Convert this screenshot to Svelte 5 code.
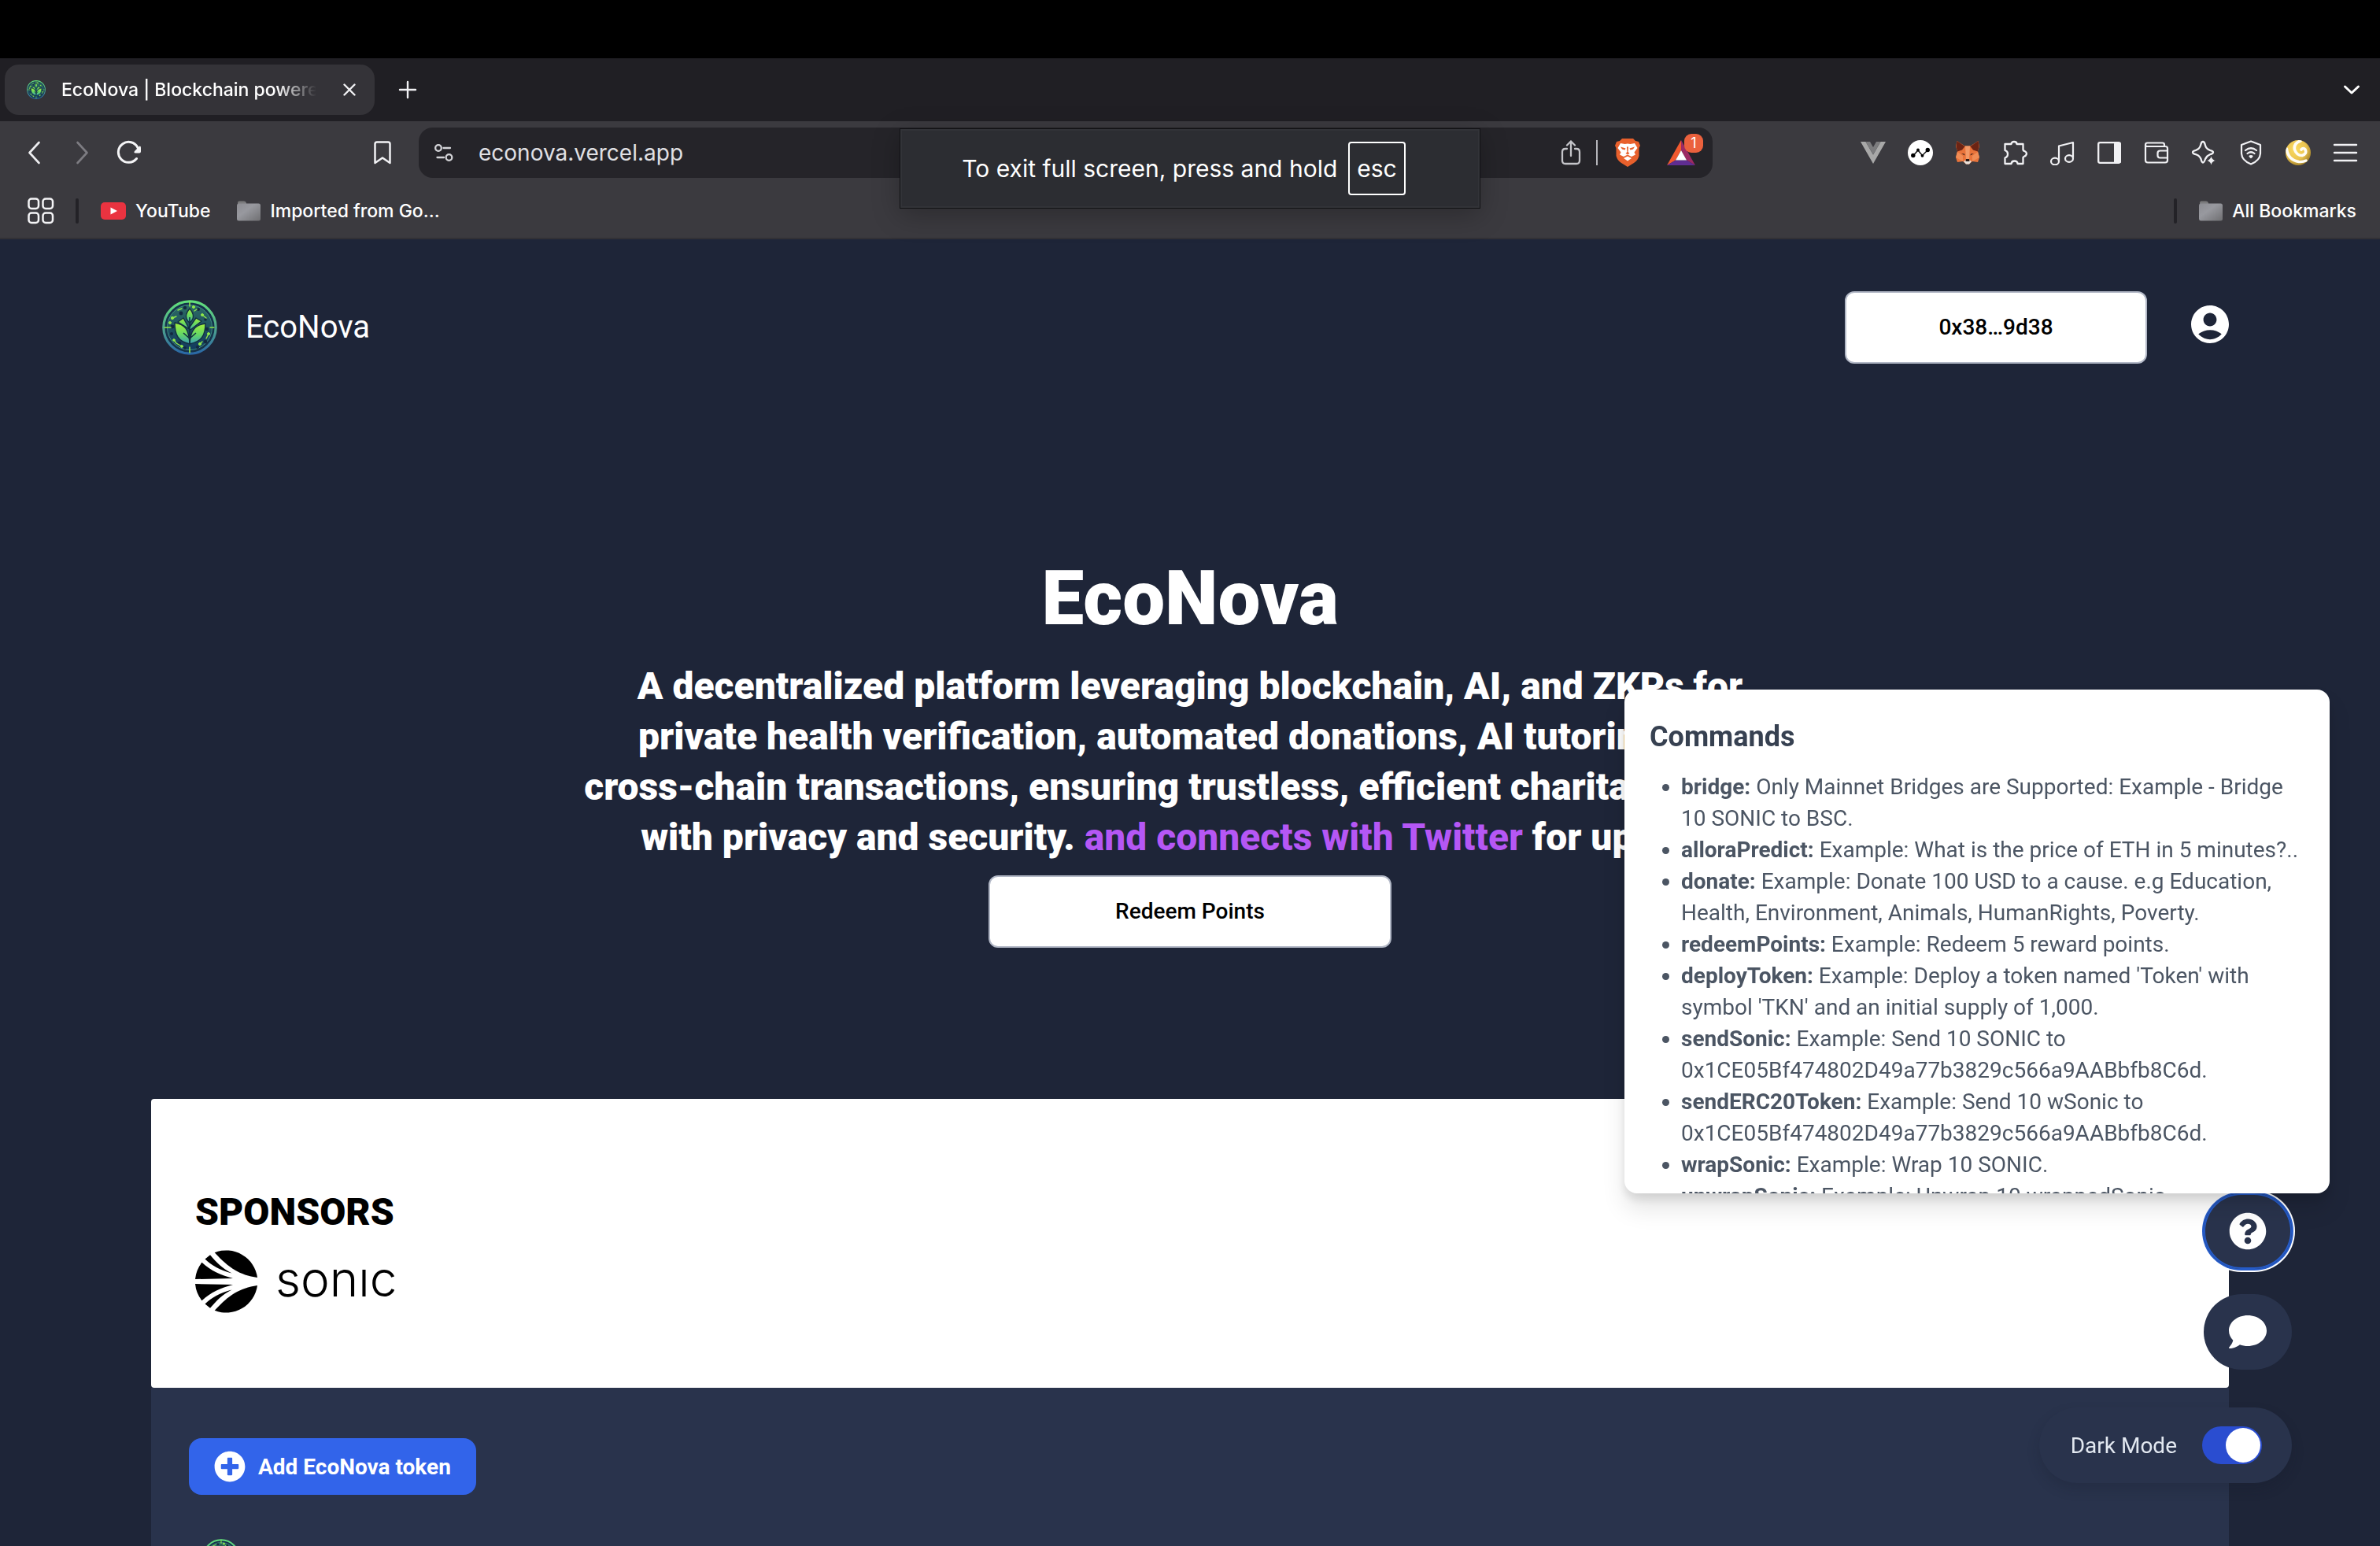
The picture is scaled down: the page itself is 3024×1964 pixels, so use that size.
<script>
  let darkMode = $state(true);
  let helpOpen = $state(true);
  let url = $state('econova.vercel.app');

  const commands = [
    ['bridge', 'Only Mainnet Bridges are Supported: Example - Bridge 10 SONIC to BSC.'],
    ['alloraPredict', 'Example: What is the price of ETH in 5 minutes?..'],
    ['donate', 'Example: Donate 100 USD to a cause. e.g Education, Health, Environment, Animals, HumanRights, Poverty.'],
    ['redeemPoints', 'Example: Redeem 5 reward points.'],
    ['deployToken', "Example: Deploy a token named 'Token' with symbol 'TKN' and an initial supply of 1,000."],
    ['sendSonic', 'Example: Send 10 SONIC to 0x1CE05Bf474802D49a77b3829c566a9AABbfb8C6d.'],
    ['sendERC20Token', 'Example: Send 10 wSonic to 0x1CE05Bf474802D49a77b3829c566a9AABbfb8C6d.'],
    ['wrapSonic', 'Example: Wrap 10 SONIC.'],
    ['unwrapSonic', 'Example: Unwrap 10 wrappedSonic.']
  ];
</script>

{#snippet ecoLogo(id)}
  <svg class="eco-logo" viewBox="0 0 70 70" aria-hidden="true">
    <defs>
      <linearGradient id="{id}-ring" x1="0" y1="0" x2="0" y2="1">
        <stop offset="0" stop-color="#62e07c" />
        <stop offset="0.5" stop-color="#4fa58c" />
        <stop offset="1" stop-color="#2a67a5" />
      </linearGradient>
      <linearGradient id="{id}-leaf" x1="0" y1="0" x2="0" y2="1">
        <stop offset="0" stop-color="#a4ee3c" />
        <stop offset="0.55" stop-color="#63d765" />
        <stop offset="1" stop-color="#3a9db8" />
      </linearGradient>
      <linearGradient id="{id}-disc" x1="0" y1="0" x2="0" y2="1">
        <stop offset="0" stop-color="#2c6a63" />
        <stop offset="1" stop-color="#123a5e" />
      </linearGradient>
    </defs>
    <circle cx="35" cy="35" r="33.2" fill="#15324a" stroke="url(#{id}-ring)" stroke-width="3.2" />
    <circle cx="35" cy="35" r="28.5" fill="url(#{id}-disc)" stroke="#3f8f83" stroke-width="1" />
    <g fill="#13283f">
      <circle cx="29" cy="10" r="2.2" /><circle cx="24" cy="17" r="2.4" /><circle cx="46" cy="12" r="2" />
      <circle cx="13" cy="34" r="2.4" /><circle cx="57" cy="37" r="2.2" /><circle cx="12" cy="43" r="2" />
      <circle cx="22" cy="55" r="2.2" /><circle cx="45" cy="60" r="2" /><circle cx="55" cy="53" r="2.2" />
      <circle cx="55" cy="25" r="1.8" /><circle cx="29" cy="61" r="1.8" />
    </g>
    <g fill="#8fe84a" stroke="#8fe84a" stroke-linecap="round">
      <circle cx="13" cy="23" r="1.7" /><circle cx="10" cy="29" r="1.5" /><circle cx="40" cy="9" r="1.6" />
      <circle cx="51" cy="19" r="1.5" /><circle cx="59" cy="43" r="1.5" /><circle cx="48" cy="56" r="1.6" />
      <circle cx="15" cy="51" r="1.3" /><circle cx="25" cy="59" r="1.4" />
      <path d="M13 23l5-2M20 13l5-2M51 19l5 4M59 43l-3 6M48 56l3-3M15 51l3 4l7 4M41 14l3-2" fill="none" stroke-width="1.4" />
      <path d="M35 3v5M35 60v7M3 35h8M61 35h5" fill="none" stroke-width="1.6" />
    </g>
    <g fill="url(#{id}-leaf)" stroke="#122f40" stroke-width="1.4" stroke-linejoin="round">
      <path d="M20 28L27 23L34 36L43 23L50 27L36 38Z" />
      <path d="M35 11C41 18 41 24 35 29C29 24 29 18 35 11Z" />
      <path d="M16 29C29 31 34 37 35 56C20 53 16 44 16 29Z" />
      <path d="M55 30C42 32 36 38 35 56C50 53 55 45 55 30Z" />
    </g>
    <path d="M35 22V56M27 42L35 49M43 42L35 49" fill="none" stroke="#122f40" stroke-width="1.6" />
  </svg>
{/snippet}

{#snippet folder(id)}
  <svg class="folder" viewBox="0 0 30 26" aria-hidden="true">
    <defs>
      <linearGradient id={id} x1="0" y1="0" x2="1" y2="1">
        <stop offset="0" stop-color="#8d8d93" />
        <stop offset="0.4" stop-color="#98999f" />
        <stop offset="1" stop-color="#6f6f72" />
      </linearGradient>
    </defs>
    <path d="M1 2.500Q1 .5 3 .5H9Q11 .5 12 2.500V6H1Z" fill="#7b7b7d" />
    <rect x="0" y="3.500" width="30" height="22" rx="2.500" fill="url(#{id})" />
  </svg>
{/snippet}

<div class="screen">
  <div class="notch"></div>

  <div class="tabs">
    <div class="tab">
      <span class="favicon">{@render ecoLogo('fav')}</span>
      <span class="tab-title">EcoNova | Blockchain powered</span>
      <button class="plain" aria-label="Close tab">
        <svg class="i16" viewBox="0 0 16 16"><path d="M1.500 1.500l13 13M14.500 1.500l-13 13" fill="none" stroke="#f1f1f4" stroke-width="2.400" stroke-linecap="round" /></svg>
      </button>
    </div>
    <button class="plain new-tab" aria-label="New tab">
      <svg class="i24" viewBox="0 0 24 24"><path d="M12 2v20M2 12h20" fill="none" stroke="#f1f1f4" stroke-width="2.400" stroke-linecap="round" /></svg>
    </button>
    <button class="plain tab-search" aria-label="Search tabs">
      <svg class="i24" viewBox="0 0 24 24"><path d="M3.500 8L12 16L20.500 8" fill="none" stroke="#fff" stroke-width="3" stroke-linecap="round" stroke-linejoin="round" /></svg>
    </button>
  </div>

  <div class="toolbar">
    <div class="row">
      <nav class="nav" aria-label="Browser">
        <button class="plain" aria-label="Back">
          <svg class="i32" viewBox="0 0 32 32"><path d="M21.500 3L9.500 16L21.500 29" fill="none" stroke="#eeeef1" stroke-width="2.600" stroke-linecap="round" stroke-linejoin="round" /></svg>
        </button>
        <button class="plain" aria-label="Forward" disabled>
          <svg class="i32" viewBox="0 0 32 32"><path d="M10.500 3L22.500 16L10.500 29" fill="none" stroke="#7d7c82" stroke-width="2.600" stroke-linecap="round" stroke-linejoin="round" /></svg>
        </button>
        <button class="plain" aria-label="Reload">
          <svg class="i32" viewBox="0 0 32 32"><path d="M25.500 23.500A13 13 0 1 1 27 9.500L28.500 13" fill="none" stroke="#f4f4f6" stroke-width="3" stroke-linecap="round" /><path d="M29.500 7.500Q31 7.500 31 9.500V14.500Q31 16.500 29 16.500H24Q21.500 16 23 14Z" fill="#f4f4f6" /></svg>
        </button>
        <button class="plain mark" aria-label="Bookmark this page">
          <svg class="i32" viewBox="0 0 32 32"><path d="M6.500 5Q6.500 2.500 9 2.500H23Q25.500 2.500 25.500 5V29L16 22.500L6.500 29Z" fill="none" stroke="#f1f1f4" stroke-width="2.500" stroke-linejoin="round" /></svg>
        </button>
      </nav>

      <div class="address">
        <button class="plain site" aria-label="Site information">
          <svg class="i24" viewBox="0 0 24 24" fill="none" stroke="#d4d4d8" stroke-width="2.300" stroke-linecap="round"><circle cx="5" cy="6" r="3.800" /><path d="M11.500 6H20" /><circle cx="18.500" cy="18" r="3.800" /><path d="M3.500 18H12" /></svg>
        </button>
        <input class="url" type="text" aria-label="Address" bind:value={url} />
        <button class="plain" aria-label="Share">
          <svg class="i32" viewBox="0 0 32 32" fill="none" stroke="#c5c5ca" stroke-width="2.300" stroke-linecap="round" stroke-linejoin="round"><path d="M16 20V1.500M11 6.500L16 1.500L21 6.500M11 11H9Q5 11 5 15V26Q5 30 9 30H23Q27 30 27 26V15Q27 11 23 11H21" /></svg>
        </button>
        <span class="bar-sep"></span>
        <button class="plain lion" aria-label="Brave Shields">
          <svg class="i36" viewBox="0 0 32 36">
            <path d="M9 0H23L26 3L30 4L32 9L30.500 12L30.500 22Q29 28 24 31L16 36L8 31Q3 28 1.500 22V12L0 9L2 4L6 3Z" fill="#e8602c" />
            <path d="M7 6L12.500 7L16 6.500L19.500 7L25 6L28.500 12L24.500 17.500L26 20.500L21 23L16 20.500L11 23L6 20.500L7.500 17.500L3.500 12Z" fill="#fff" />
            <path d="M11 25L16 22.500L21 25L16 28.500Z" fill="#fff" />
            <path d="M7 10.500L13.500 12.500L12.500 14.500L9 13.500ZM25 10.500L18.500 12.500L19.500 14.500L23 13.500ZM15 10.500H17L16.600 17L18.500 19L16 20.200L13.500 19L15.400 17Z" fill="#e8602c" />
          </svg>
        </button>
        <button class="plain rewards" aria-label="Rewards, 1 new">
          <svg class="i36" viewBox="0 0 36 36">
            <path d="M18 2L0 34L11 27.500L18 15Z" fill="#f1592f" />
            <path d="M18 2V15L25 27.500L36 34Z" fill="#9c2a63" />
            <path d="M0 34L11 27.500H25L36 34Z" fill="#5f2d91" />
            <path d="M18 15L11 27.500H25Z" fill="#fff" />
          </svg>
          <span class="badge">1</span>
        </button>
      </div>

      <div class="extensions">
        <button class="plain" aria-label="Vue devtools">
          <svg class="i32" viewBox="0 0 32 32"><path d="M0 2H6.500L16 18.500L25.500 2H32L16 30Z" fill="#a8a8a8" /><path d="M6.500 2H12L16 9L20 2H25.500L16 18.500Z" fill="#7c7c7e" /></svg>
        </button>
        <button class="plain" aria-label="Analytics extension">
          <svg class="i32" viewBox="0 0 32 32"><circle cx="16" cy="16" r="16" fill="#fff" /><path d="M7 19.500L13 13L18.500 19.500L25.500 12.500" fill="none" stroke="#111" stroke-width="1.500" /><circle cx="6.800" cy="19.500" r="2.700" /><circle cx="13" cy="12.500" r="1.900" /><circle cx="18.500" cy="19.800" r="1.900" /><circle cx="25.300" cy="12.500" r="2.700" /></svg>
        </button>
        <button class="plain" aria-label="MetaMask">
          <svg class="i32" viewBox="0 0 32 32">
            <path d="M2.500 1L12.500 7.500H19.500L29.500 1L31 8L29 14L31 22L29 28L22 27L18 30.500H14L10 27L3 28L1 22L3 14L1 8Z" fill="#e9733a" />
            <path d="M2.500 1L12.500 8L9 12.500L3 14.500L1.500 8Z" fill="#6b2414" />
            <path d="M29.500 1L19.500 8L23 12.500L29 14.500L30.500 8Z" fill="#6b2414" />
            <path d="M13 7.500H19L18 25H14Z" fill="#f39a68" />
            <path d="M3 15L10 20L10 27L1 22ZM29 15L22 20L22 27L31 22Z" fill="#f08c55" />
            <path d="M8 17L12 17.500L12.500 19.500ZM24 17L20 17.500L19.500 19.500Z" fill="#3a1f1a" />
            <path d="M11 27L13.500 25.500H18.500L21 27L18 30.500H14Z" fill="#e9e2dc" />
            <path d="M14 24H18L18.500 27H13.500Z" fill="#2a1a17" />
          </svg>
        </button>
        <button class="plain" aria-label="Extensions">
          <svg class="i32" viewBox="0 0 32 32" fill="none" stroke="#f1f1f4" stroke-width="2.300" stroke-linejoin="round"><path d="M3.500 5H11.500Q11.500 2 15 2Q18.500 2 18.500 5H26.500V12.500Q27 13.800 28.500 14Q31 15.200 31 17.500Q30.500 20 27.500 21L26.500 22V30H19.500Q19.300 26.500 15.500 26.500Q12 26.500 11.500 30H3.500V22.500Q7 21.500 7 17.500Q7 14 3.500 13Z" /></svg>
        </button>
        <button class="plain" aria-label="Media">
          <svg class="i32" viewBox="0 0 32 32" fill="none" stroke="#f1f1f4" stroke-width="2.200" stroke-linejoin="round"><path d="M12 27V7.500L30 3V22.500" /><ellipse cx="7" cy="27" rx="5" ry="4.300" /><ellipse cx="25" cy="23.500" rx="5" ry="4.300" /></svg>
        </button>
        <button class="plain" aria-label="Side panel">
          <svg class="i32" viewBox="0 0 32 32"><rect x="2.200" y="3.200" width="27.600" height="25.600" rx="2" fill="none" stroke="#f1f1f4" stroke-width="2.300" /><rect x="22" y="3" width="9" height="26" rx="1.500" fill="#f1f1f4" /></svg>
        </button>
        <button class="plain" aria-label="Wallet">
          <svg class="i32" viewBox="0 0 32 32" fill="none" stroke="#f1f1f4" stroke-width="2.200" stroke-linejoin="round"><path d="M26 8V6Q26 3.500 23.500 3.500H4.500Q2 3.500 2 6V25.500Q2 28.500 5 28.500H27Q30 28.500 30 25.500V10.500Q30 8 27 8H4Q2 8 2 6M30 13.500H20.500Q17.500 13.500 17.500 16.500V19.500Q17.500 22.500 20.500 22.500H30" /></svg>
        </button>
        <button class="plain" aria-label="AI assistant">
          <svg class="i32" viewBox="0 0 32 32"><path d="M15 2Q17 2 17.800 6Q18.800 11 24 12.800Q28 13.800 28 15.500Q28 17.300 24 18.200Q19.500 20 18 24Q16.500 28.500 15 28.500Q13.500 28.500 12.500 24Q11 19.800 6 18.200Q2 17.300 2 15.500Q2 13.800 6 12.800Q11.200 11 12.200 6Q13 2 15 2Z" fill="none" stroke="#f1f1f4" stroke-width="2.300" /><path d="M25.500 19.500Q26.500 25 31.500 26Q26.500 27 25.500 32Q24.500 27 19.500 26Q24.500 25 25.500 19.500Z" fill="#f1f1f4" stroke="#3b3a3f" stroke-width="0.800" /></svg>
        </button>
        <button class="plain" aria-label="VPN">
          <svg class="i32" viewBox="0 0 32 32" fill="none" stroke="#f1f1f4" stroke-width="2.200" stroke-linecap="round" stroke-linejoin="round"><path d="M16 1.500L28 6V17Q27.500 26 16 30.500Q4.500 26 4 17V6Z" /><path d="M9 13Q16 7.500 23 13M11.500 17Q16 13.500 20.500 17" /><path d="M14.500 20.500Q16 19.500 17.500 20.500L16 22Z" fill="#f1f1f4" /></svg>
        </button>
        <button class="plain" aria-label="Profile">
          <svg class="i32" viewBox="0 0 32 32">
            <defs><radialGradient id="ball" cx="0.4" cy="0.35" r="0.7"><stop offset="0" stop-color="#fbdc62" /><stop offset="0.6" stop-color="#ebc450" /><stop offset="1" stop-color="#9d7c26" /></radialGradient><clipPath id="ball-clip"><circle cx="16" cy="16" r="16" /></clipPath></defs>
            <circle cx="16" cy="16" r="16" fill="url(#ball)" />
            <g fill="none" stroke="#fffdf5" stroke-linecap="round" clip-path="url(#ball-clip)"><path d="M19 1Q10 4 11.500 12Q14 19.500 21 19.500Q27.500 17.500 25 12Q22.500 9 20 12" stroke-width="3.600" /><path d="M1.500 11Q3 25 17 27.500Q22 28 26 26" stroke-width="3.400" /></g>
          </svg>
        </button>
        <button class="plain" aria-label="Menu">
          <svg class="i32" viewBox="0 0 32 32"><path d="M2 6H30M2 16H30M2 26H30" fill="none" stroke="#f1f1f4" stroke-width="2.400" stroke-linecap="round" /></svg>
        </button>
      </div>
    </div>

    <div class="bookmarks">
      <button class="plain" aria-label="All tabs">
        <svg class="i36" viewBox="0 0 36 36" fill="none" stroke="#f4f4f6" stroke-width="2.500"><rect x="2.500" y="2.500" width="12.500" height="12.500" rx="3.500" /><rect x="20.500" y="2.500" width="12.500" height="12.500" rx="3.500" /><rect x="2.500" y="20.500" width="12.500" height="12.500" rx="3.500" /><rect x="20.500" y="20.500" width="12.500" height="12.500" rx="3.500" /></svg>
      </button>
      <span class="sep"></span>
      <a class="bookmark" href="#youtube">
        <svg class="youtube" viewBox="0 0 32 22" aria-hidden="true"><rect width="32" height="22" rx="5" fill="#ea3340" /><path d="M12.500 6.500L21 11L12.500 15.500Z" fill="#fff" /></svg>
        YouTube
      </a>
      <a class="bookmark imported" href="#imported">{@render folder('f1')}Imported from Go...</a>
      <span class="spacer"></span>
      <span class="sep"></span>
      <a class="bookmark" href="#all">{@render folder('f2')}All Bookmarks</a>
    </div>

    <div class="fullscreen-hint" role="status">
      <span>To exit full screen, press and hold</span>
      <kbd>esc</kbd>
    </div>
  </div>

  <main class="page">
    <header class="header">
      <a class="brand" href="#home"><span class="brand-logo">{@render ecoLogo('brand')}</span>EcoNova</a>
      <div class="account">
        <button class="outlined wallet">0x38…9d38</button>
        <button class="plain profile" aria-label="Account">
          <svg class="i48" viewBox="2 2 20 20"><path fill="#fff" d="M12 2C6.480 2 2 6.480 2 12s4.480 10 10 10 10-4.480 10-10S17.520 2 12 2zm0 4c1.930 0 3.500 1.570 3.500 3.500S13.930 13 12 13s-3.500-1.570-3.500-3.500S10.070 6 12 6zm0 14c-2.030 0-4.430-.82-6.140-2.880C7.550 15.800 9.680 15 12 15s4.450.8 6.140 2.120C16.430 19.180 14.030 20 12 20z" /></svg>
        </button>
      </div>
    </header>

    <section class="hero">
      <h1>EcoNova</h1>
      <p>
        A decentralized platform leveraging blockchain, AI, and ZKPs for<br />
        private health verification, automated donations, AI tutoring, and<br />
        cross-chain transactions, ensuring trustless, efficient charitable giving<br />
        with privacy and security. <a class="twitter" href="#twitter">and connects with Twitter</a> for updates.
      </p>
      <button class="outlined redeem">Redeem Points</button>
    </section>

    <section class="sponsors">
      <h2>SPONSORS</h2>
      <a class="sonic" href="#sonic" aria-label="Sonic">
        <svg class="sonic-mark" viewBox="0 0 80 80" aria-hidden="true">
          <defs>
            <g id="sonic-half">
              <path d="M24.700 3.200A40 40 0 0 1 79 35C56 31.500 43 23 24.700 3.200Z" />
              <path d="M12.500 11.500L19 6.200C27 15.500 34 23 46.500 29.500C32 26 20 19 12.500 11.500Z" />
              <path d="M8.500 15.800C20 26.500 32 31.500 48 36L0 37A40 40 0 0 1 8.500 15.800Z" />
            </g>
          </defs>
          <use href="#sonic-half" />
          <use href="#sonic-half" transform="matrix(1 0 0 -1 0 80)" />
        </svg>
        <span class="sonic-name">sonıc</span>
      </a>
    </section>

    <section class="token">
      <button class="add-token">
        <svg class="i40" viewBox="0 0 512 512"><path fill="#fff" d="M256 8C119 8 8 119 8 256s111 248 248 248 248-111 248-248S393 8 256 8zm144 276c0 6.600-5.400 12-12 12h-92v92c0 6.600-5.400 12-12 12h-56c-6.600 0-12-5.400-12-12v-92h-92c-6.600 0-12-5.400-12-12v-56c0-6.600 5.400-12 12-12h92v-92c0-6.600 5.400-12 12-12h56c6.600 0 12 5.400 12 12v92h92c6.600 0 12 5.400 12 12v56z" /></svg>
        Add EcoNova token
      </button>
      <span class="token-logo">{@render ecoLogo('token')}</span>
    </section>
  </main>

  <div class="floating">
    <button class="fab help" aria-label="Help" aria-expanded={helpOpen} onclick={() => (helpOpen = !helpOpen)}>
      <svg class="i48" viewBox="0 0 512 512"><path fill="#fff" d="M504 256c0 136.997-111.043 248-248 248S8 392.997 8 256C8 119.083 119.043 8 256 8s248 111.083 248 248zM262.655 90c-54.497 0-89.255 22.957-116.549 63.758-3.536 5.286-2.353 12.415 2.715 16.258l34.699 26.310c5.205 3.947 12.621 3.008 16.665-2.122 17.864-22.658 30.113-35.797 57.303-35.797 20.429 0 45.698 13.148 45.698 32.958 0 14.976-12.363 22.667-32.534 33.976C247.128 238.528 216 254.941 216 296v4c0 6.627 5.373 12 12 12h56c6.627 0 12-5.373 12-12v-1.333c0-28.462 83.186-29.647 83.186-106.667 0-58.002-60.165-102-116.531-102zM256 338c-25.365 0-46 20.635-46 46 0 25.364 20.635 46 46 46s46-20.636 46-46c0-25.365-20.635-46-46-46z" /></svg>
    </button>
    <button class="fab" aria-label="Chat">
      <svg class="i48" viewBox="0 0 512 512"><path fill="#fff" d="M256 32C114.600 32 0 125.100 0 240c0 49.600 21.400 95 57 130.700C44.500 421.100 2.700 466 2.200 466.500c-2.200 2.300-2.800 5.700-1.500 8.700S4.800 480 8 480c66.300 0 116-31.800 140.600-51.400 32.700 12.300 69 19.400 107.400 19.400 141.400 0 256-93.100 256-208S397.400 32 256 32z" /></svg>
    </button>
    <label class="dark">
      <span>Dark Mode</span>
      <input type="checkbox" role="switch" bind:checked={darkMode} />
    </label>
  </div>

  {#if helpOpen}
    <aside class="commands">
      <h3>Commands</h3>
      <ul>
        {#each commands as [name, text]}
          <li><strong>{name}:</strong> {text}</li>
        {/each}
      </ul>
    </aside>
  {/if}
</div>

<style>
  :global(body) { background: #1e2538; }
  :global(*) { box-sizing: border-box; }

  .screen {
    position: relative;
    display: flex;
    flex-direction: column;
    height: 100vh;
    overflow: hidden;
    font-family: Roboto, sans-serif;
    color: #fff;
  }
  svg { display: block; flex: none; }
  a { color: inherit; text-decoration: none; }
  button { font-family: inherit; cursor: pointer; }
  .plain { display: flex; flex: none; padding: 0; border: 0; background: none; }
  .i16 { width: 16px; height: 16px; }
  .i24 { width: 24px; height: 24px; }
  .i32 { width: 32px; height: 32px; }
  .i36 { width: 36px; height: 36px; }
  .i40 { width: 40px; height: 40px; }
  .i48 { width: 48px; height: 48px; }
  .eco-logo { width: 100%; height: 100%; }

  /* browser chrome */
  .notch { flex: none; height: 74px; background: #000; }
  .tabs, .toolbar { flex: none; font-family: Inter, sans-serif; }
  .tabs {
    display: flex;
    align-items: center;
    height: 80px;
    padding: 0 24px 0 6px;
    background: #201f24;
  }
  .tab {
    display: flex;
    align-items: center;
    width: 470px;
    height: 64px;
    padding: 0 24px 0 28px;
    border-radius: 18px;
    background: #343338;
  }
  .favicon { flex: none; width: 24px; height: 24px; }
  .tab-title {
    flex: 1;
    margin: 0 24px 0 20px;
    overflow: hidden;
    white-space: nowrap;
    font-size: 23px;
    font-weight: 500;
    line-height: 32px;
    mask-image: linear-gradient(to right, #000 82%, transparent 97%);
  }
  .new-tab { margin-left: 30px; }
  .tab-search { margin-left: auto; }

  .toolbar { position: relative; padding-top: 8px; background: #3b3a3f; border-bottom: 2px solid #323136; }
  .row { display: grid; grid-template-columns: 504px 1fr 820px; align-items: center; padding: 0 28px; }
  .nav { display: flex; gap: 28px; padding-right: 30px; }
  .mark { margin-left: auto; }
  .address {
    display: flex;
    align-items: center;
    height: 64px;
    padding: 0 22px 0 20px;
    border-radius: 18px;
    background: #252429;
  }
  .url {
    flex: 1;
    min-width: 0;
    margin-left: 32px;
    padding: 0;
    border: 0;
    outline: 0;
    background: none;
    color: #e0e0e4;
    font-family: inherit;
    font-size: 28px;
    line-height: 36px;
  }
  .bar-sep { width: 2px; height: 32px; margin: 0 20px 0 16px; background: #b5b5ba; }
  .rewards { position: relative; margin-left: 32px; }
  .badge {
    position: absolute;
    top: -6px;
    left: 22px;
    width: 24px;
    height: 24px;
    border-radius: 9px;
    background: #eb613d;
    color: #fff;
    font-size: 18px;
    line-height: 24px;
    text-align: center;
  }
  .extensions { display: flex; justify-content: flex-end; gap: 28px; }

  .bookmarks {
    display: flex;
    align-items: center;
    height: 68px;
    margin-top: 8px;
    padding: 0 30px 0 34px;
    font-size: 23px;
    font-weight: 500;
  }
  .sep { width: 4px; height: 32px; margin: 0 28px 0 26px; border-radius: 2px; background: #232227; }
  .bookmark { display: flex; align-items: center; gap: 12px; }
  .imported { margin-left: 34px; }
  .spacer { flex: 1; }
  .youtube { width: 32px; height: 22px; }
  .folder { width: 30px; height: 26px; }

  .fullscreen-hint {
    position: absolute;
    top: 9px;
    left: 0;
    right: 0;
    display: flex;
    align-items: center;
    justify-content: center;
    gap: 14px;
    width: 738px;
    height: 102px;
    margin: 0 auto;
    padding-right: 16px;
    border: 1px solid #111114;
    background: #2c2d32;
    box-shadow: inset 0 0 0 2px #323338, 0 8px 32px rgba(0, 0, 0, 0.25);
    font-size: 30px;
  }
  kbd {
    padding: 14px 9px;
    border: 2px solid #fff;
    border-radius: 4px;
    font-family: inherit;
    font-size: 30px;
    line-height: 36px;
  }

  /* page */
  .page { flex: 1; min-height: 0; padding: 0 192px; background: #1e2538; }
  .header {
    display: flex;
    align-items: center;
    justify-content: space-between;
    padding-top: 66px;
  }
  .brand { display: flex; align-items: center; gap: 36px; padding-left: 14px; font-size: 40px; line-height: 56px; }
  .brand-logo { width: 70px; height: 70px; }
  .account { display: flex; align-items: center; gap: 56px; }
  .profile { padding-bottom: 8px; }
  .outlined {
    height: 92px;
    border: 2px solid #b2b8c6;
    border-radius: 12px;
    background: #fff;
    color: #000;
    font-size: 28px;
    font-weight: 500;
    line-height: 40px;
  }
  .wallet { width: 384px; }
  .redeem { width: 512px; }

  .hero { display: flex; flex-direction: column; align-items: center; padding: 250px 0 192px; text-align: center; }
  h1 { margin: 0 0 32px; font-size: 96px; font-weight: 900; line-height: 96px; }
  p { margin: 0 0 16px; font-size: 48px; font-weight: 900; line-height: 64px; white-space: nowrap; }
  .twitter { color: #b557f5; font-weight: 800; }

  .sponsors { padding: 112px 56px 95px; border-radius: 4px; background: #fff; color: #000; }
  h2 { margin: 0 0 16px; font-size: 48px; font-weight: 900; line-height: 64px; }
  .sonic { display: inline-flex; align-items: center; gap: 22px; vertical-align: top; }
  .sonic-mark { width: 80px; height: 80px; }
  .sonic-name { padding-bottom: 6px; font-family: Inter, sans-serif; font-size: 62px; font-weight: 300; line-height: 72px; }

  .token { height: 100%; padding: 64px 48px; background: #29334c; }
  .add-token {
    display: flex;
    align-items: center;
    gap: 16px;
    height: 72px;
    padding: 0 32px;
    border: 0;
    border-radius: 16px;
    background: #3264ea;
    color: #fff;
    font-size: 28px;
    font-weight: 700;
  }
  .token-logo { display: block; width: 48px; height: 48px; margin: 56px 0 0 17px; }

  /* overlays */
  .floating {
    position: fixed;
    right: 112px;
    bottom: 80px;
    display: flex;
    flex-direction: column;
    align-items: flex-end;
    gap: 32px;
  }
  .fab {
    display: grid;
    place-items: center;
    width: 112px;
    height: 96px;
    border: 0;
    border-radius: 48px;
    background: #29334c;
  }
  .help { box-shadow: inset 0 0 0 2px #255bc8, 0 0 0 2px #255bc8, 0 0 0 4px #fff; }
  .dark {
    display: flex;
    align-items: center;
    gap: 32px;
    height: 96px;
    margin-top: 16px;
    padding: 0 38px 0 40px;
    border-radius: 48px;
    background: #29334c;
    box-shadow: 0 8px 16px rgba(20, 24, 40, 0.2);
    color: #e2e8f0;
    font-size: 28px;
  }
  .dark input {
    appearance: none;
    display: flex;
    width: 76px;
    height: 48px;
    margin: 0;
    padding: 2px;
    border-radius: 24px;
    background: #6b7280;
  }
  .dark input::before { content: ''; width: 44px; height: 44px; border-radius: 50%; background: #fff; }
  .dark input:checked { justify-content: flex-end; background: #2a4dd0; }

  .commands {
    position: fixed;
    right: 64px;
    bottom: 448px;
    width: 896px;
    height: 640px;
    padding: 32px;
    overflow: hidden;
    border-radius: 16px;
    background: #fff;
    box-shadow: 0 20px 30px rgba(0, 0, 0, 0.1), 0 8px 12px rgba(0, 0, 0, 0.1);
    color: #4b5563;
  }
  h3 { margin: 0 0 16px; color: #374151; font-size: 36px; font-weight: 700; line-height: 56px; }
  ul { margin: 0; padding-left: 40px; font-size: 28px; line-height: 40px; }
  strong { font-weight: 700; }
</style>
